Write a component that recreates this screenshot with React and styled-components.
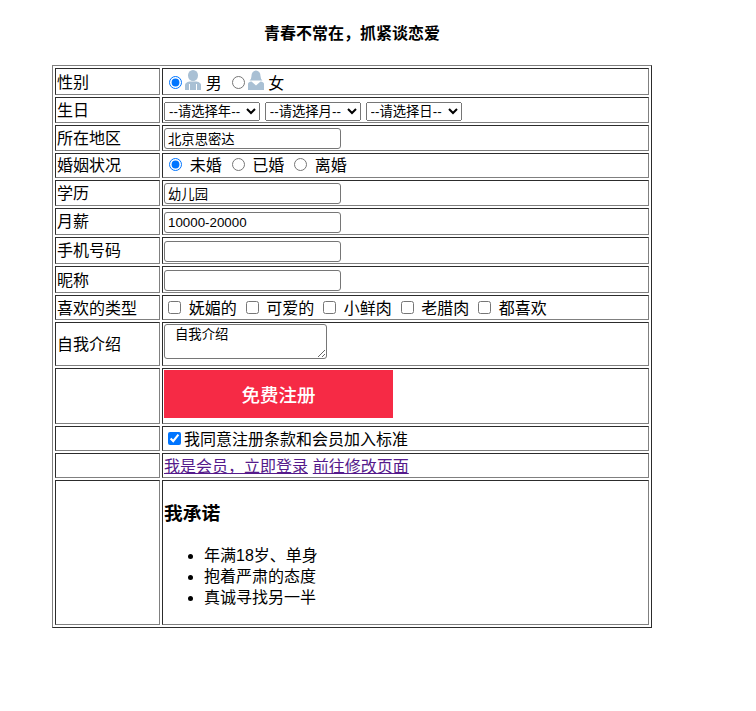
import React from 'react'
import styled, { createGlobalStyle } from 'styled-components'

const GlobalStyle = createGlobalStyle`
    body {
        margin: 0;
        background: #fff;
        color: #000;
        font-family: "Liberation Sans", "Noto Sans CJK SC", sans-serif;
    }
`

function MaleIcon() {
    return (
        <GenderIcon viewBox="0 0 16 20">
            <ellipse cx="8" cy="5.500" rx="5" ry="5.500" fill="#a9c0d4" />
            <path d="M0 20 V15 Q0 12.500 4.500 11.500 H11.500 Q16 12.500 16 15 V20 Z" fill="#a9c0d4" />
            <path d="M4.500 14 V20 M11.500 14 V20" stroke="#fff" strokeWidth="1" />
        </GenderIcon>
    )
}

function FemaleIcon() {
    return (
        <GenderIcon viewBox="0 0 16 20">
            <path d="M3.500 6 a4.500 5.500 0 0 1 9 0 q0 3 2 4.500 H1.500 q2 -1.500 2 -4.500 Z" fill="#a9c0d4" />
            <path d="M0 20 V14 Q0 12 3.500 11.500 L8 15.500 L12.500 11.500 Q16 12 16 14 V20 Z" fill="#a9c0d4" />
        </GenderIcon>
    )
}

function App() {
    return (
        <Page>
            <GlobalStyle />
            <Title>青春不常在，抓紧谈恋爱</Title>
            <FormTable>
                <tbody>
                    <Row $h={27}>
                        <LabelCell $pad="2px 1px 0">性别</LabelCell>
                        <FieldCell $pad="1px 1px 0">
                            <Radio name="sex" defaultChecked /><MaleIcon /> 男 <Radio name="sex" /><FemaleIcon /> 女
                        </FieldCell>
                    </Row>
                    <Row $h={26}>
                        <LabelCell>生日</LabelCell>
                        <FieldCell>
                            <DateSelect><option>--请选择年--</option></DateSelect>{' '}
                            <DateSelect><option>--请选择月--</option></DateSelect>{' '}
                            <DateSelect><option>--请选择日--</option></DateSelect>
                        </FieldCell>
                    </Row>
                    <Row $h={26}>
                        <LabelCell>所在地区</LabelCell>
                        <FieldCell><TextInput defaultValue="北京思密达" /></FieldCell>
                    </Row>
                    <Row $h={25}>
                        <LabelCell>婚姻状况</LabelCell>
                        <FieldCell>
                            <Radio name="marry" defaultChecked /> 未婚 <Radio name="marry" /> 已婚 <Radio name="marry" /> 离婚
                        </FieldCell>
                    </Row>
                    <Row $h={26}>
                        <LabelCell>学历</LabelCell>
                        <FieldCell><TextInput defaultValue="幼儿园" /></FieldCell>
                    </Row>
                    <Row $h={27}>
                        <LabelCell>月薪</LabelCell>
                        <FieldCell><TextInput defaultValue="10000-20000" /></FieldCell>
                    </Row>
                    <Row $h={27}>
                        <LabelCell>手机号码</LabelCell>
                        <FieldCell><TextInput /></FieldCell>
                    </Row>
                    <Row $h={27}>
                        <LabelCell $pad="2px 1px 0">昵称</LabelCell>
                        <FieldCell><TextInput /></FieldCell>
                    </Row>
                    <Row $h={25}>
                        <LabelCell $pad="2px 1px 0">喜欢的类型</LabelCell>
                        <FieldCell $pad="2px 1px 0">
                            <Check /> 妩媚的 <Check /> 可爱的 <Check /> 小鲜肉 <Check /> 老腊肉 <Check /> 都喜欢
                        </FieldCell>
                    </Row>
                    <Row $h={44}>
                        <LabelCell>自我介绍</LabelCell>
                        <FieldCell><Intro defaultValue=" 自我介绍" /></FieldCell>
                    </Row>
                    <Row $h={56}>
                        <LabelCell />
                        <FieldCell><SubmitButton>免费注册</SubmitButton></FieldCell>
                    </Row>
                    <Row $h={25}>
                        <LabelCell />
                        <FieldCell $pad="2px 1px 0"><Check defaultChecked />我同意注册条款和会员加入标准</FieldCell>
                    </Row>
                    <Row $h={25}>
                        <LabelCell />
                        <FieldCell $pad="2px 1px 0">
                            <VisitedLink href="#login">我是会员，立即登录</VisitedLink>{' '}
                            <VisitedLink href="#edit">前往修改页面</VisitedLink>
                        </FieldCell>
                    </Row>
                    <Row $h={145}>
                        <LabelCell />
                        <FieldCell>
                            <PromiseTitle>我承诺</PromiseTitle>
                            <PromiseList>
                                <li>年满18岁、单身</li>
                                <li>抱着严肃的态度</li>
                                <li>真诚寻找另一半</li>
                            </PromiseList>
                        </FieldCell>
                    </Row>
                </tbody>
            </FormTable>
        </Page>
    )
}

export default App


const Page = styled.div`
    width: 600px;
    height: 688px;
    margin-left: 52px;
    padding-top: 23px;
    font-size: 16px;
    line-height: 21px;
`
const Title = styled.div`
    text-align: center;
    font-weight: 700;
    margin-bottom: 21px;
`
const FormTable = styled.table`
    width: 600px;
    border: 1px outset #808080;
    border-spacing: 2px;
    border-collapse: separate;
`
const Row = styled.tr`
    height: ${props => props.$h}px;
`
const LabelCell = styled.td`
    width: 101px;
    border: 1px inset #808080;
    padding: ${props => props.$pad || '1px'};
`
const FieldCell = styled.td`
    border: 1px inset #808080;
    padding: ${props => props.$pad || '1px'};
    word-spacing: 0.3px;
`
const Radio = styled.input.attrs({ type: 'radio' })`
    margin: 3px 3px 0 5px;
`
const Check = styled.input.attrs({ type: 'checkbox' })`
    margin: 3px 3px 3px 4px;
`
const GenderIcon = styled.svg`
    width: 16px;
    height: 20px;
    vertical-align: -1px;
`
const DateSelect = styled.select`
    width: 96px;
    height: 19px;
    font-family: inherit;
    font-size: 13.33px;
`
const TextInput = styled.input.attrs({ type: 'text' })`
    box-sizing: border-box;
    width: 177px;
    height: 21px;
    padding: 1px 3px;
    border: 1px solid #767676;
    border-radius: 3px;
    font-family: inherit;
    font-size: 13.33px;
`
const Intro = styled.textarea`
    box-sizing: border-box;
    width: 163px;
    height: 35px;
    padding: 2px;
    border: 1px solid #767676;
    border-radius: 3px;
    font-family: "Liberation Mono", "Noto Sans CJK SC", monospace;
    font-size: 13.33px;
    line-height: 17px;
`
const SubmitButton = styled.button`
    display: block;
    width: 229px;
    height: 48px;
    margin: 0 0 4px;
    border: 0;
    background: #f62a45;
    color: #fff;
    font-family: inherit;
    font-size: 18.5px;
    font-weight: 500;
`
const VisitedLink = styled.a`
    color: #551a8b;
`
const PromiseTitle = styled.h3`
    font-size: 18.72px;
    line-height: 25px;
    margin: 18.72px 0;
`
const PromiseList = styled.ul`
    margin: 17px 0 15px;
    padding-left: 40px;
`
